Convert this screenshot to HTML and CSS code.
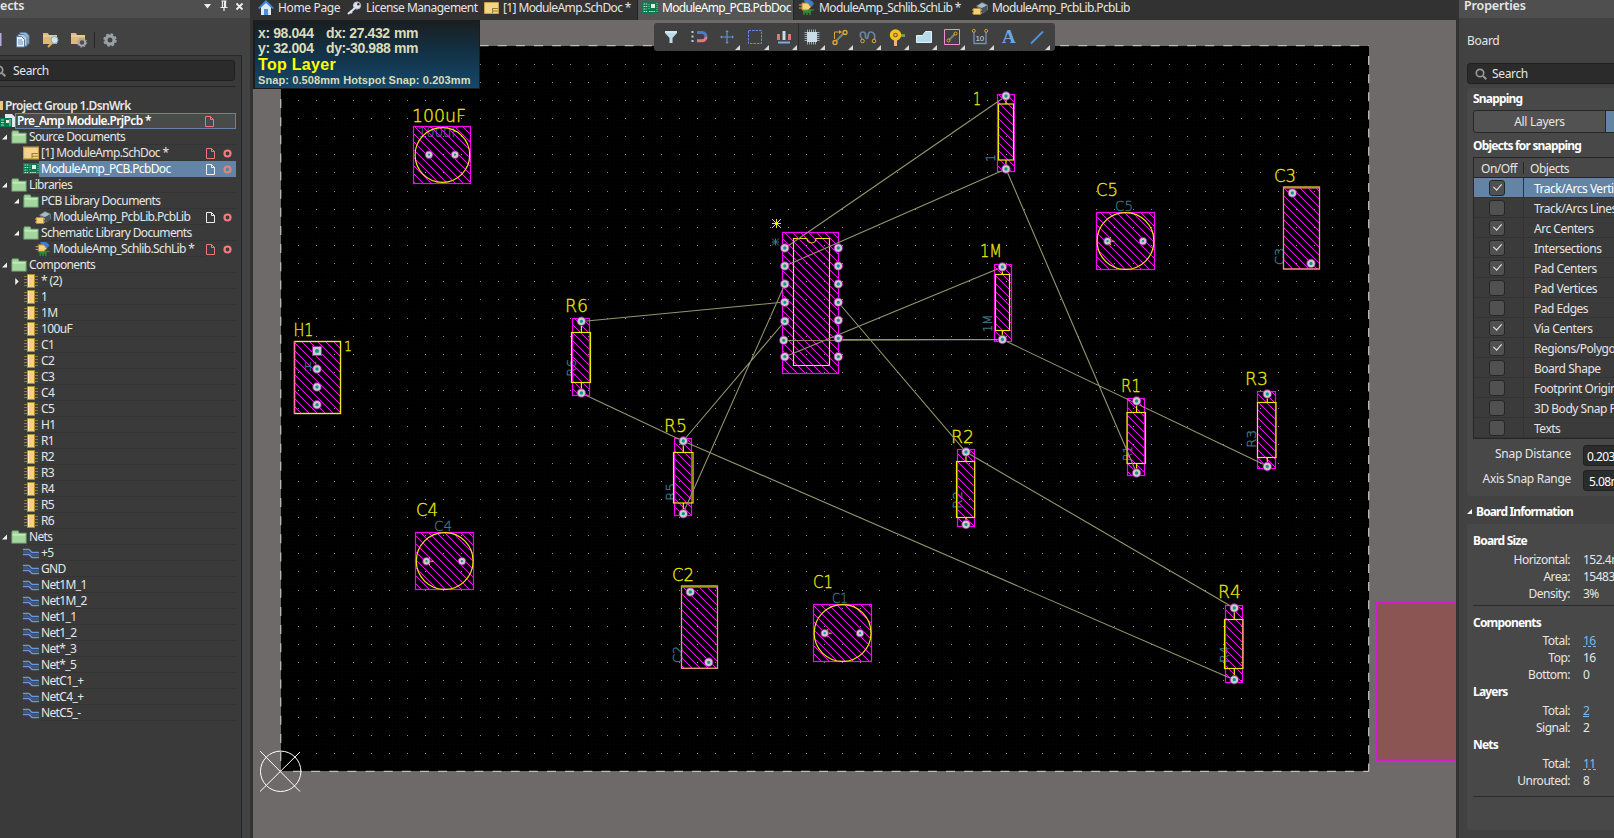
FILE: index.html
```html
<!DOCTYPE html>
<html lang="en">
<head>
<meta charset="utf-8">
<title>ModuleAmp_PCB.PcbDoc</title>
<link rel="stylesheet" href="styles.css">
</head>
<body>
<svg class="defs" width="0" height="0">
  <symbol id="i-folder" viewBox="0 0 14 13"><path d="M.5 2.5V12h13V3H7L6 1H1z" fill="#a5d6a0" stroke="#78b878"/><path d="M1 4.5h12" stroke="#d5f2d0"/></symbol>
  <symbol id="i-sch" viewBox="0 0 15 12"><path d="M.5.5h14v11H.5z" fill="#f2d48a" stroke="#c79f45"/><path d="M8 6.5h6M8 9h6M8.500 6v5" stroke="#9c7a2c"/></symbol>
  <symbol id="i-pcb" viewBox="0 0 16 12"><path d="M0 0h16v11H0z" fill="#087a50"/><path d="M1.500 2h4M1.500 4.500h4M1.500 7h3M1.500 9.500h4M7 9.500h6" stroke="#c6e8d0" stroke-dasharray="1.500 .7"/><path d="M9 2h4v4H9z" fill="#e2efe6"/><path d="M15 1v9M7 2v6" stroke="#7fd09f" stroke-dasharray="1 1"/></symbol>
  <symbol id="i-chip" viewBox="0 0 14 14"><path d="M0 2.500h14M0 5.500h14M0 8.500h14M0 11.500h14" stroke="#957a37"/><path d="M3.500.5h7v13h-7z" fill="#f5d27d" stroke="#b48a35"/><path d="M4.500 1v12" stroke="#fff0c2"/></symbol>
  <symbol id="i-net" viewBox="0 0 16 12"><path d="M0 2.500h6l3 3h7M0 7.500h6l3 3h7" fill="none" stroke="#6d94e0" stroke-width="1.500"/><path d="M0 5h5l4 3h7" fill="none" stroke="#4d6fae"/></symbol>
  <symbol id="i-plib" viewBox="0 0 16 14"><path d="m4 5 6-4 6 3v5l-6 4z" fill="#63727e"/><path d="m5 5 5-3 5 2-5 3z" fill="#a9bac6"/><path d="M10 7v6M12 6v5M14 5v5" stroke="#303b43"/><path d="M1.500 7.500h7v6h-7z" fill="#f4d27c" stroke="#b28a37"/><path d="M0 9h2M0 12h2M8 9h2M8 12h2" stroke="#e3bb5d"/></symbol>
  <symbol id="i-slib" viewBox="0 0 16 15"><path d="M5 0h6q3 1 4 4l-3 3H7z" fill="#3d7bd3"/><path d="M4 9h8v4H4z" fill="#278a35"/><path d="M5 13v2M8 13v2M11 13v2M12 10h3" stroke="#3baa42"/><path d="M3 3h6l3 4-3 3H3z" fill="#f5d27d" stroke="#ad812c"/><path d="M0 5h3M0 8h3" stroke="#d7ac4a"/></symbol>
  <symbol id="i-doc" viewBox="0 0 9 11"><path d="M.5.500h5l3 3v7h-8zM5.500.500v3h3" fill="none" stroke="currentColor"/></symbol>
  <symbol id="i-ring" viewBox="0 0 9 9"><circle cx="4.500" cy="4.500" r="3" fill="none" stroke="#ee7e7e" stroke-width="2.200"/></symbol>
  <symbol id="i-open" viewBox="0 0 6 6"><path d="M5 0v5H0z" fill="#f2f2f2"/></symbol>
  <symbol id="i-shut" viewBox="0 0 6 8"><path d="M1 0v8l4-4z" fill="#f2f2f2"/></symbol>
  <symbol id="i-glass" viewBox="0 0 12 12"><circle cx="5" cy="5" r="3.700" fill="none" stroke="#999" stroke-width="1.700"/><path d="m8 8 3.300 3.300" stroke="#999" stroke-width="2"/></symbol>
  <symbol id="i-fly" viewBox="0 0 5 5"><path d="M5 0v5H0z" fill="#d8d8d8"/></symbol>
</svg>

<div class="app">
  <aside class="projects">
    <header class="bar"><span class="bar-title">ects</span>
      <svg class="bar-icons" width="42" height="12" viewBox="0 0 42 12"><path d="M1 4h7l-3.500 4.500z" fill="#eee"/><path d="M18.500 1h5M19.500 1v6M22.500 1v6M17.500 7.500h7M21 7v4" stroke="#eee" fill="none" stroke-width="1.200"/><path d="M22 1v6" stroke="#eee" stroke-width="2"/><path d="m33.500 3.500 6 6m0-6-6 6" stroke="#eee" stroke-width="1.800"/></svg>
    </header>
    <div class="tools">
      <svg width="120" height="18" viewBox="0 0 120 18">
        <path d="M0 2h1.500v13H0z" fill="#b7a9dd"/>
        <path d="M20 1.500h6l3 3V13h-9z" fill="#9dbbd8" stroke="#597b9e"/><path d="M18 3.500h6l3 3V15h-9z" fill="#b7cfe6" stroke="#597b9e"/><path d="M16.500 5.500h5l3 3V16h-8z" fill="#e6f1fb" stroke="#597b9e"/><path d="M18 9h4M18 11h5M18 13h5" stroke="#6c90b5"/>
        <path d="M43 2h5l1 2h8v9H43z" fill="#dfb976"/><path d="M43 5h14" stroke="#f4dba8"/><circle cx="54.500" cy="9" r="3.500" fill="#cfe3f1" stroke="#8ba5b8"/><path d="m52 12-4 4" stroke="#e0ad5d" stroke-width="2"/>
        <path d="M71 2h5l1 2h8v9H71z" fill="#dfb976"/><path d="M71 5h14" stroke="#f4dba8"/><circle cx="82" cy="11.500" r="3.300" fill="#55504a" stroke="#a4a8aa" stroke-width="2"/><circle cx="82" cy="11.500" r="4.700" fill="none" stroke="#a4a8aa" stroke-dasharray="1.500 2.200"/>
        <path d="M94.500 1v16" stroke="#252525"/>
        <circle cx="110" cy="9" r="4" fill="none" stroke="#9aa3a8" stroke-width="3"/><circle cx="110" cy="9" r="6" fill="none" stroke="#9aa3a8" stroke-width="1.500" stroke-dasharray="2.700 2"/>
      </svg>
    </div>
    <div class="tree-pane">
      <div class="search"><svg width="12" height="12"><use href="#i-glass"/></svg><span>Search</span></div>
      <div class="rule"></div>
      <ul class="tree">
        <li class="group"><i class="stub"></i><b>Project Group 1.DsnWrk</b></li>
        <li class="project"><svg class="pic" width="15" height="14" viewBox="0 0 15 14"><path d="M5 0h7l3 3v10H5z" fill="#e6e6f0"/><path d="M0 4h12v9H0z" fill="#087a50"/><path d="M1 6h3M1 8.500h3M1 11h3M10 5v7" stroke="#a8e0b8"/><path d="M6 6h3v3H6z" fill="#e2efe6"/></svg><span class="frame"><b>Pre_Amp Module.PrjPcb *</b><svg class="doc red" width="9" height="11"><use href="#i-doc"/></svg></span></li>
        <li class="l0"><svg class="arr"><use href="#i-open"/></svg><svg class="ic"><use href="#i-folder"/></svg><span>Source Documents</span></li>
        <li class="l1"><svg class="arr"></svg><svg class="ic"><use href="#i-sch"/></svg><span>[1] ModuleAmp.SchDoc *</span><svg class="doc red"><use href="#i-doc"/></svg><svg class="ring"><use href="#i-ring"/></svg></li>
        <li class="l1 sel"><svg class="arr"></svg><svg class="ic"><use href="#i-pcb"/></svg><span>ModuleAmp_PCB.PcbDoc</span><svg class="doc"><use href="#i-doc"/></svg><svg class="ring"><use href="#i-ring"/></svg></li>
        <li class="l0"><svg class="arr"><use href="#i-open"/></svg><svg class="ic"><use href="#i-folder"/></svg><span>Libraries</span></li>
        <li class="l1"><svg class="arr"><use href="#i-open"/></svg><svg class="ic"><use href="#i-folder"/></svg><span>PCB Library Documents</span></li>
        <li class="l2"><svg class="arr"></svg><svg class="ic"><use href="#i-plib"/></svg><span>ModuleAmp_PcbLib.PcbLib</span><svg class="doc"><use href="#i-doc"/></svg><svg class="ring"><use href="#i-ring"/></svg></li>
        <li class="l1"><svg class="arr"><use href="#i-open"/></svg><svg class="ic"><use href="#i-folder"/></svg><span>Schematic Library Documents</span></li>
        <li class="l2"><svg class="arr"></svg><svg class="ic"><use href="#i-slib"/></svg><span>ModuleAmp_Schlib.SchLib *</span><svg class="doc red"><use href="#i-doc"/></svg><svg class="ring"><use href="#i-ring"/></svg></li>
        <li class="l0"><svg class="arr"><use href="#i-open"/></svg><svg class="ic"><use href="#i-folder"/></svg><span>Components</span></li>
        <li class="l1"><svg class="arr"><use href="#i-shut"/></svg><svg class="ic"><use href="#i-chip"/></svg><span>* (2)</span></li>
        <li class="l1"><svg class="arr"></svg><svg class="ic"><use href="#i-chip"/></svg><span>1</span></li>
        <li class="l1"><svg class="arr"></svg><svg class="ic"><use href="#i-chip"/></svg><span>1M</span></li>
        <li class="l1"><svg class="arr"></svg><svg class="ic"><use href="#i-chip"/></svg><span>100uF</span></li>
        <li class="l1"><svg class="arr"></svg><svg class="ic"><use href="#i-chip"/></svg><span>C1</span></li>
        <li class="l1"><svg class="arr"></svg><svg class="ic"><use href="#i-chip"/></svg><span>C2</span></li>
        <li class="l1"><svg class="arr"></svg><svg class="ic"><use href="#i-chip"/></svg><span>C3</span></li>
        <li class="l1"><svg class="arr"></svg><svg class="ic"><use href="#i-chip"/></svg><span>C4</span></li>
        <li class="l1"><svg class="arr"></svg><svg class="ic"><use href="#i-chip"/></svg><span>C5</span></li>
        <li class="l1"><svg class="arr"></svg><svg class="ic"><use href="#i-chip"/></svg><span>H1</span></li>
        <li class="l1"><svg class="arr"></svg><svg class="ic"><use href="#i-chip"/></svg><span>R1</span></li>
        <li class="l1"><svg class="arr"></svg><svg class="ic"><use href="#i-chip"/></svg><span>R2</span></li>
        <li class="l1"><svg class="arr"></svg><svg class="ic"><use href="#i-chip"/></svg><span>R3</span></li>
        <li class="l1"><svg class="arr"></svg><svg class="ic"><use href="#i-chip"/></svg><span>R4</span></li>
        <li class="l1"><svg class="arr"></svg><svg class="ic"><use href="#i-chip"/></svg><span>R5</span></li>
        <li class="l1"><svg class="arr"></svg><svg class="ic"><use href="#i-chip"/></svg><span>R6</span></li>
        <li class="l0"><svg class="arr"><use href="#i-open"/></svg><svg class="ic"><use href="#i-folder"/></svg><span>Nets</span></li>
        <li class="l1"><svg class="arr"></svg><svg class="ic"><use href="#i-net"/></svg><span>+5</span></li>
        <li class="l1"><svg class="arr"></svg><svg class="ic"><use href="#i-net"/></svg><span>GND</span></li>
        <li class="l1"><svg class="arr"></svg><svg class="ic"><use href="#i-net"/></svg><span>Net1M_1</span></li>
        <li class="l1"><svg class="arr"></svg><svg class="ic"><use href="#i-net"/></svg><span>Net1M_2</span></li>
        <li class="l1"><svg class="arr"></svg><svg class="ic"><use href="#i-net"/></svg><span>Net1_1</span></li>
        <li class="l1"><svg class="arr"></svg><svg class="ic"><use href="#i-net"/></svg><span>Net1_2</span></li>
        <li class="l1"><svg class="arr"></svg><svg class="ic"><use href="#i-net"/></svg><span>Net*_3</span></li>
        <li class="l1"><svg class="arr"></svg><svg class="ic"><use href="#i-net"/></svg><span>Net*_5</span></li>
        <li class="l1"><svg class="arr"></svg><svg class="ic"><use href="#i-net"/></svg><span>NetC1_+</span></li>
        <li class="l1"><svg class="arr"></svg><svg class="ic"><use href="#i-net"/></svg><span>NetC4_+</span></li>
        <li class="l1"><svg class="arr"></svg><svg class="ic"><use href="#i-net"/></svg><span>NetC5_-</span></li>
      </ul>
    </div>
  </aside>

  <main class="editor">
    <nav class="tabs">
      <div class="tab home"><svg width="16" height="16" viewBox="0 0 16 16"><path d="M3 7v8h10V7L8 2z" fill="#dce9f7"/><path d="M8 0 0 8l1.500 1L8 3l6.500 6L16 8z" fill="#3c8ae0"/><path d="M6 9h4v6H6z" fill="#4a90dd"/></svg><span>Home Page</span></div>
      <div class="tab lic"><svg width="16" height="14" viewBox="0 0 16 14"><circle cx="11" cy="4.500" r="3.600" fill="#dfe3ee" stroke="#b8bfce"/><circle cx="12.300" cy="3.300" r="1.200" fill="#333"/><path d="m9 7-7 6M4 10l2 2" stroke="#dfe3ee" stroke-width="2.200"/></svg><span>License Management</span></div>
      <div class="tab sch"><svg width="15" height="12"><use href="#i-sch"/></svg><span>[1] ModuleAmp.SchDoc *</span></div>
      <div class="tab pcb active"><svg width="16" height="12"><use href="#i-pcb"/></svg><span>ModuleAmp_PCB.PcbDoc</span></div>
      <div class="tab slib"><svg width="16" height="15"><use href="#i-slib"/></svg><span>ModuleAmp_Schlib.SchLib *</span></div>
      <div class="tab plib"><svg width="16" height="14"><use href="#i-plib"/></svg><span>ModuleAmp_PcbLib.PcbLib</span></div>
    </nav>
    <div class="canvas">
      <svg id="board" width="1203" height="818" viewBox="253 20 1203 818">
        <defs>
          <pattern id="hatch" width="8" height="8" patternUnits="userSpaceOnUse"><path d="M0 0h1v1h1v1h1v1h1v1h1v1h1v1h1v1h1v1h-1v-1h-1v-1h-1v-1h-1v-1h-1v-1h-1v-1h-1v-1h-1z" fill="#f0f" shape-rendering="crispEdges"/></pattern>
          <pattern id="fine" width="3.628" height="3.628" patternUnits="userSpaceOnUse"><path d="M0 0h1v1H0z" fill="#080808"/></pattern>
        </defs>
        <path d="M281 46h1088v725H281z" fill="#000"/>
        <path d="M281 46h1088v725H281z" fill="url(#fine)"/>
        <g id="grid" fill="#8f8f8f" shape-rendering="crispEdges"></g>
        <path d="M479.600 45.700H1369M293 771.300h1076" class="edge"/>
        <path d="M280.700 99v672M1368.700 56v715" class="edge"/>
        <path d="M1470 602.300h-93.500v158h93.500" fill="#8b5554" stroke="#d01fd0" stroke-width="1.300"/>
        <g id="parts"></g>
        <g id="nets" class="rat"></g>
        <g id="pads"></g>
        <g stroke="#fff" fill="none"><circle cx="280.700" cy="771.300" r="20.200"/><path d="m260 751 40 40.500m0-39.500-40 39.500"/></g>
      </svg>
      <div class="hud"><div class="hud-in">
        <p class="xy"><span>x: 98.044</span><span>dx: 27.432</span><span>mm</span></p>
        <p class="xy"><span>y: 32.004</span><span>dy:-30.988</span><span>mm</span></p>
        <p class="layer">Top Layer</p>
        <p class="snap">Snap: 0.508mm Hotspot Snap: 0.203mm</p>
      </div></div>
      <div class="active-bar">
        <span><svg width="18" height="18" viewBox="0 0 18 18"><path d="M3 3h12v2l-4.500 5v5h-3v-5L3 5z" fill="#b9dce8"/><path d="M3 4h12" stroke="#e4f5fa"/></svg></span>
        <span><svg width="18" height="18" viewBox="0 0 18 18"><path d="M7 4.500h5a4 4 0 0 1 4 4.300" fill="none" stroke="#4f78c5" stroke-width="3"/><path d="M16 8.800a4 4 0 0 1-4 4H7" fill="none" stroke="#e07a80" stroke-width="3"/><path d="M2.500 3v12" stroke="#b9cdd8" stroke-width="2" stroke-dasharray="2 2.500"/></svg></span>
        <span><svg width="18" height="18" viewBox="0 0 18 18"><path d="M9 3v12M3 9h12" stroke="#6790d8" stroke-width="1.200"/><path d="m9 2 1.700 2H7.300zM9 16l1.700-2H7.300zM2 9l2-1.700v3.400zM16 9l-2-1.700v3.400z" fill="#6790d8"/></svg><svg class="fly"><use href="#i-fly"/></svg></span>
        <span><svg width="18" height="18" viewBox="0 0 18 18"><path d="M2.500 2.500h13v13h-13z" fill="none" stroke="#6589e8" stroke-dasharray="2.500 1"/></svg><svg class="fly"><use href="#i-fly"/></svg></span>
        <span><svg width="18" height="18" viewBox="0 0 18 18"><path d="M3.500 6v6M14.500 6v6" stroke="#e0757b" stroke-width="3"/><path d="M9 3v9" stroke="#c9dceb" stroke-width="3"/><path d="M3 14.500h12" stroke="#7fa8dc" stroke-width="2"/></svg><svg class="fly"><use href="#i-fly"/></svg></span>
        <span class="sep"><svg width="18" height="18" viewBox="0 0 18 18"><path d="M4.500 1.500v15M6.500 1.500v15M8.500 1.500v15M10.500 1.500v15M12.500 1.500v15M1.500 4.500h15M1.500 6.500h15M1.500 8.500h15M1.500 10.500h15M1.500 12.500h15" stroke="#9aa9b3"/><path d="M4 4h10v10H4z" fill="#ccdce6"/></svg><svg class="fly"><use href="#i-fly"/></svg></span>
        <span><svg width="18" height="18" viewBox="0 0 18 18"><path d="M3.500 11V4H9" fill="none" stroke="#dfa534"/><path d="m8 2 3 2-3 2z" fill="#dfa534"/><path d="m5 13 8-8" stroke="#77838c" stroke-width="2"/><circle cx="14" cy="4.500" r="2" fill="none" stroke="#dfa534" stroke-width="1.400"/><circle cx="4" cy="14.500" r="2" fill="none" stroke="#dfa534" stroke-width="1.400"/></svg><svg class="fly"><use href="#i-fly"/></svg></span>
        <span><svg width="18" height="18" viewBox="0 0 18 18"><path d="M3.500 11.500C0 8 1 4 4 4s2.500 3 2.500 5 2.500 2 2.500 0 0-5 3-5 5 4 3 7.500" fill="none" stroke="#6d84a2" stroke-width="1.700"/><circle cx="3.500" cy="13" r="1.800" fill="none" stroke="#dfa534"/><circle cx="15" cy="13" r="1.800" fill="none" stroke="#dfa534"/></svg><svg class="fly"><use href="#i-fly"/></svg></span>
        <span><svg width="18" height="18" viewBox="0 0 18 18"><path d="M11 7.500h7" stroke="#61a845" stroke-width="3"/><path d="M8.500 11v7" stroke="#e9b184" stroke-width="3"/><circle cx="8.500" cy="7" r="4" fill="#5b4720" stroke="#f5c21d" stroke-width="3.500"/><circle cx="8.500" cy="7" r="1.400" fill="#d9b255"/></svg><svg class="fly"><use href="#i-fly"/></svg></span>
        <span><svg width="18" height="18" viewBox="0 0 18 18"><path d="M1.500 14.500v-7h6l3-4h6v11z" fill="#b8dbea" stroke="#e1f4fb"/></svg><svg class="fly"><use href="#i-fly"/></svg></span>
        <span><svg width="18" height="18" viewBox="0 0 18 18"><path d="M1.500 1.500h15v15h-15z" fill="none" stroke="#f08bd6"/><path d="m6 12 6-6" stroke="#77838c" stroke-width="1.800"/><circle cx="12.500" cy="5.500" r="1.500" fill="none" stroke="#dfa534"/><circle cx="5.500" cy="12.500" r="1.500" fill="none" stroke="#dfa534"/></svg><svg class="fly"><use href="#i-fly"/></svg></span>
        <span><svg width="18" height="18" viewBox="0 0 18 18"><path d="M3 4v11.500h12V4" fill="none" stroke="#7190be" stroke-width="1.300"/><circle cx="2.800" cy="2.800" r="1.500" fill="none" stroke="#dfa534"/><circle cx="15.200" cy="2.800" r="1.500" fill="none" stroke="#dfa534"/><text x="4.500" y="12.500" class="dim">10</text></svg><svg class="fly"><use href="#i-fly"/></svg></span>
        <span><b class="letter">A</b></span>
        <span><svg width="18" height="18" viewBox="0 0 18 18"><path d="m3 15.500 12-12" stroke="#5095dc" stroke-width="1.800"/></svg><svg class="fly"><use href="#i-fly"/></svg></span>
      </div>
    </div>
  </main>

  <aside class="props">
    <header class="bar">Properties</header>
    <div class="kind">Board</div>
    <div class="search"><svg width="12" height="12"><use href="#i-glass"/></svg><span>Search</span></div>
    <section class="card snapping">
      <h3>Snapping</h3>
      <div class="seg"><span>All Layers</span><span class="on"></span></div>
      <h3 class="second">Objects for snapping</h3>
      <div class="table">
        <div class="tr th"><span>On/Off</span><span>Objects</span></div>
        <div class="tr sel"><i class="cb on"></i><span>Track/Arcs Vertices</span></div>
        <div class="tr"><i class="cb"></i><span>Track/Arcs Lines</span></div>
        <div class="tr"><i class="cb on"></i><span>Arc Centers</span></div>
        <div class="tr"><i class="cb on"></i><span>Intersections</span></div>
        <div class="tr"><i class="cb on"></i><span>Pad Centers</span></div>
        <div class="tr"><i class="cb"></i><span>Pad Vertices</span></div>
        <div class="tr"><i class="cb"></i><span>Pad Edges</span></div>
        <div class="tr"><i class="cb on"></i><span>Via Centers</span></div>
        <div class="tr"><i class="cb on"></i><span>Regions/Polygons</span></div>
        <div class="tr"><i class="cb"></i><span>Board Shape</span></div>
        <div class="tr"><i class="cb"></i><span>Footprint Origins</span></div>
        <div class="tr"><i class="cb"></i><span>3D Body Snap Points</span></div>
        <div class="tr"><i class="cb"></i><span>Texts</span></div>
      </div>
      <div class="field"><label>Snap Distance</label><span class="input">0.203mm</span></div>
      <div class="field"><label>Axis Snap Range</label><span class="input wide">5.08mm</span></div>
    </section>
    <h2><svg width="6" height="6"><use href="#i-open"/></svg>Board Information</h2>
    <section class="card info">
      <h3>Board Size</h3>
      <dl><dt>Horizontal:</dt><dd>152.4mm</dd><dt>Area:</dt><dd>15483</dd><dt>Density:</dt><dd>3%</dd></dl>
      <hr>
      <h3>Components</h3>
      <dl class="gap"><dt>Total:</dt><dd><a>16</a></dd><dt>Top:</dt><dd>16</dd><dt>Bottom:</dt><dd>0</dd></dl>
      <h3 class="tight">Layers</h3>
      <dl class="gap"><dt>Total:</dt><dd><a>2</a></dd><dt>Signal:</dt><dd>2</dd></dl>
      <h3 class="tight">Nets</h3>
      <dl class="gap"><dt>Total:</dt><dd><a>11</a></dd><dt>Unrouted:</dt><dd>8</dd></dl>
      <hr class="last">
    </section>
  </aside>
</div>
<script src="board.js"></script>
</body>
</html>
```
FILE: styles.css
```css
* { box-sizing: border-box; }
body { margin: 0; background: #323232; color: #e6e6e6; font: 12px/16px "Noto Sans", "Open Sans", sans-serif; letter-spacing: -.64px; }
.defs { position: absolute; }
ul, p, h2, h3, dl, dd { margin: 0; padding: 0; list-style: none; }
.app { display: grid; grid-template-columns: 253px 1203px 158px; width: 1614px; height: 838px; overflow: hidden; white-space: nowrap; }
.bar { height: 18px; background: #4f4f4f; font-weight: 600; font-size: 12.500px; line-height: 12px; letter-spacing: -.15px; }

/* Projects panel */
.projects { background: #424242; border-right: 3px solid #323232; height: 838px; overflow: hidden; }
.projects .bar { display: flex; justify-content: space-between; }
.bar-icons { margin-right: 5px; }
.tools { height: 37px; padding-top: 13px; }
.tools svg { display: block; }
.tree-pane { width: 242px; height: 783px; background: #3a3a3a; border-top: 1px solid #282828; border-right: 1px solid #252525; padding-top: 4px; }
.search { display: flex; align-items: center; background: #2b2b2b; border: 1px solid #202020; border-radius: 3px; height: 21px; letter-spacing: -.35px; }
.projects .search { width: 242px; margin-left: -7px; gap: 7px; }
.rule { width: 235px; height: 1px; background: #252525; margin: 5px 0 10px; }
.tree li { height: 16px; display: flex; align-items: center; width: 236px; }
.tree li > span { flex: 1; height: 16px; line-height: 16px; padding-left: 2px; border-bottom: 1px solid #343434; }
.tree .arr { width: 6px; height: 7px; flex: none; }
.tree .ic { width: 16px; height: 14px; flex: none; }
.tree .doc { width: 9px; height: 11px; margin-right: 8px; color: #eee; }
.tree .red { color: #e97777; }
.tree .ring { width: 9px; height: 9px; margin-right: 4px; }
.l0 { padding-left: 2px; } .l0 .ic { margin-left: 3px; }
.l1 { padding-left: 14px; } .l1 .ic { margin-left: 3px; }
.l2 { padding-left: 26px; } .l2 .ic { margin-left: 3px; }
.tree .sel { background: linear-gradient(90deg, transparent 39px, #6384a6 39px); }
.tree .sel > span { border-color: transparent; color: #fff; }
.stub { width: 3px; height: 9px; background: #eec77d; margin-right: 2px; }
.group b, .project b { font-weight: 600; letter-spacing: -.64px; }
.tree .group b { padding-top: 1px; }
.tree li.project > .frame { display: flex; align-items: center; border: 1px solid #6384a6; background: #4a4a4a; padding-left: 1px; color: #fff; }
.frame b { flex: 1; } .tree .frame .doc { margin-right: 21px; }

/* Document tabs */
.editor { display: flex; flex-direction: column; height: 838px; min-width: 0; }
.tabs { display: flex; height: 20px; background: #323232; letter-spacing: -.62px; }
.tab { display: flex; align-items: center; height: 20px; padding: 0 0 5px 5px; gap: 4px; flex: none; }
.tab svg { flex: none; }
.home { width: 88px; letter-spacing: -.35px; } .lic { width: 140px; letter-spacing: -.5px; } .sch { width: 156px; padding-left: 3px; }
.pcb { width: 157px; padding-left: 4px; border-left: 1px solid #222; border-right: 1px solid #222; letter-spacing: -.68px; }
.active { background: #555; color: #fff; }
.slib { width: 173px; } .plib { width: 190px; }

/* PCB canvas */
.canvas { position: relative; width: 1203px; height: 818px; background: #6e6a69; overflow: hidden; }
#board { display: block; }
.edge { stroke: #bdbdbd; stroke-width: 1.300; stroke-dasharray: 9 9.140; }
.rat { stroke: #96966e; stroke-width: 1.100; fill: none; }
.lbl { font-family: "DejaVu Sans", sans-serif; font-weight: 200; letter-spacing: 0; }
.hud { position: absolute; left: 0; top: 0; width: 227px; height: 69px; background: #1c1c1c; padding: 0 1px 1px 2px; }
.hud-in { width: 224px; height: 68px; background: linear-gradient(#1b1e20, #123247 50%, #15486a); padding: 6px 3px; font-family: "Liberation Sans", Arial, sans-serif; font-weight: bold; color: #dcdcb8; }
.xy { display: grid; grid-template-columns: 68px 68px 30px; font-size: 14px; line-height: 15px; letter-spacing: -.4px; }
.layer { color: #ff0; font-size: 16px; line-height: 17px; letter-spacing: .3px; }
.snap { font-size: 11px; line-height: 14px; letter-spacing: .1px; }
.active-bar { position: absolute; left: 401px; top: 3px; width: 401px; height: 28px; background: #404040; border-radius: 3px; display: flex; padding-left: 3px; }
.active-bar > span { width: 28.140px; height: 28px; display: flex; align-items: center; justify-content: center; position: relative; }
.active-bar .fly { position: absolute; right: 1px; bottom: 1px; width: 5px; height: 5px; }
.active-bar .sep { border-left: 1px solid #2b2b2b; }
.letter { font: bold 19px "Liberation Serif", serif; color: #6aa9e4; }
.dim { font: 8px "Liberation Sans", sans-serif; fill: #d0d8e0; letter-spacing: -.3px; }

/* Properties panel */
.props { background: #424242; border-left: 3px solid #323232; height: 838px; overflow: hidden; }
.props .bar { padding-left: 5px; }
.kind { height: 45px; padding: 15px 0 0 8px; letter-spacing: -.3px; }
.props .search { margin-left: 8px; width: 170px; padding-left: 7px; gap: 5px; }
.card { background: #484848; margin-left: 8px; padding-left: 6px; width: 200px; border-radius: 3px; }
.card h3 { font-size: 12px; line-height: 17px; height: 16px; font-weight: 700; letter-spacing: -.8px; color: #fff; }
.snapping { height: 408px; margin-top: 4px; padding-top: 2px; }
.seg { display: flex; height: 23px; margin-top: 4px; border: 1px solid #262626; border-radius: 3px; background: #525252; overflow: hidden; letter-spacing: -.3px; }
.seg span { width: 131px; flex: none; text-align: center; line-height: 21px; }
.seg .on { background: #6384a6; border-left: 1px solid #262626; }
.card .second { margin-top: 4px; height: 20px; line-height: 18px; }
.table { border: 1px solid #262626; background: #3b3b3b; letter-spacing: -.48px; }
.tr { display: flex; align-items: center; height: 20px; border-bottom: 1px solid #333; }
.tr > span { padding-left: 10px; border-left: 1px solid #333; height: 19px; line-height: 21px; }
.th { background: #484848; border-bottom: 1px solid #262626; }
.th span:first-child { width: 49px; padding-left: 7px; border: 0; }
.th span:last-child { padding-left: 6px; border-color: #262626; height: 12px; line-height: 13px; }
.tr.sel { background: #6384a6; color: #fff; }
.cb { width: 16px; height: 16px; margin: 0 18px 0 15px; background: #515151; border: 1px solid #262626; border-radius: 3px; flex: none; }
.cb.on::after { content: ""; display: block; width: 4px; height: 7px; margin: 1px 0 0 5px; border: solid #eee; border-width: 0 1.400px 1.400px 0; transform: rotate(42deg); }
.field { display: flex; height: 21px; margin-top: 4px; letter-spacing: -.3px; }
.table + .field { margin-top: 6px; }
.field label { width: 98px; text-align: right; line-height: 18px; margin-right: 12px; }
.input { width: 80px; background: #2b2b2b; border: 1px solid #202020; border-radius: 3px; padding-left: 3px; line-height: 21px; color: #fff; letter-spacing: -.55px; }
.wide { padding-left: 5px; }
h2 { display: flex; align-items: center; gap: 3px; height: 28px; padding: 4px 0 0 8px; font-size: 12px; font-weight: 700; letter-spacing: -.85px; color: #fff; }
.info { height: 306px; padding-top: 8px; }
dl { display: grid; grid-template-columns: 97px 60px; column-gap: 13px; grid-auto-rows: 17px; line-height: 17px; padding-top: 3px; letter-spacing: -.5px; }
dt { text-align: right; }
.gap { padding-top: 3px; }
.info h3:not(.tight) + .gap { padding-top: 2px; }
dd a { display: inline-block; color: #7fb9ea; height: 15px; line-height: 17px; border-bottom: 1px dashed #7fb9ea; }
hr { height: 1px; border: 0; background: #2c2c2c; margin: 3px 0 8px; }
hr.last { margin-top: 7px; }
```
FILE: board.js
```js
const mk = (parent, tag, attrs, text) => {
  const el = document.createElementNS('http://www.w3.org/2000/svg', tag);
  for (const k in attrs) el.setAttribute(k, attrs[k]);
  if (text) el.textContent = text;
  document.getElementById(parent).append(el);
};
const YEL = '#ecec00', GHOST = '#3f7684', MAG = '#ff00ff';

// Coarse grid: 2.54 mm pitch, measured from the board origin
let dots = '';
for (let i = 1; i < 60; i++)
  for (let j = 1; j < 40; j++)
    dots += `M${Math.floor(280.500 + i * 18.140)} ${Math.floor(771.500 - j * 18.140)}h1v1h-1z`;
mk('grid', 'path', { d: dots });

const rect = (x1, y1, x2, y2, stroke, fill = 'none', w = 1.200) =>
  mk('parts', 'rect', { x: x1, y: y1, width: x2 - x1, height: y2 - y1, stroke, fill, 'stroke-width': w });
const label = (t, x, base, w, size = 17, color = YEL) =>
  mk('parts', 'text', { x, y: base, class: 'lbl', 'font-size': size, fill: color, stroke: color, 'stroke-width': .3, textLength: w, lengthAdjust: 'spacingAndGlyphs' }, t);
const ghostV = (t, x, y, w) =>
  mk('parts', 'text', { transform: `translate(${x} ${y}) rotate(-90)`, class: 'lbl', 'font-size': 13, fill: GHOST, stroke: GHOST, 'stroke-width': .4, textLength: w, lengthAdjust: 'spacingAndGlyphs' }, t);
const pad = (x, y, r = 3.700) => {
  mk('pads', 'circle', { cx: x, cy: y, r, fill: '#129090', stroke: '#a226a2', 'stroke-width': 2 });
  mk('pads', 'circle', { cx: x, cy: y, r: r - 1, fill: '#0d9494', stroke: '#cbcbcb', 'stroke-width': 2.100 });
};

// Axial resistors: name, outer box, body box, pad x, pad y pair, label, ghost label
[
  ['1', 997.5, 94.5, 1014.5, 171.5, 998.5, 104, 1013.5, 160, 1006, 96, 169, 973, 105, 8, 995, 162, 8],
  ['1M', 994.5, 264.5, 1011.5, 341.5, 995.5, 274.5, 1009.5, 330.5, 1002.4, 267, 339.5, 980, 257, 22, 992, 332, 17],
  ['R1', 1127.5, 398.5, 1144.5, 475.5, 1127, 412.5, 1145.5, 463.5, 1136.6, 401, 473, 1121, 391.5, 20, 1132, 461, 15],
  ['R3', 1257.5, 391.5, 1275.5, 468.5, 1257.5, 402.5, 1276, 457.5, 1267.3, 394, 466.5, 1245, 384.5, 23, 1256, 448, 18],
  ['R6', 572.5, 318.5, 589.5, 395.5, 571.5, 332.5, 590.5, 382.5, 581.4, 321.3, 393, 565, 311.5, 23, 576, 377, 18],
  ['R5', 674.5, 438.5, 691.5, 515.5, 673.5, 452.5, 693, 503, 683.3, 441, 513.7, 664, 431.5, 23, 675, 501, 18],
  ['R2', 957.5, 449.5, 974.5, 526.5, 956.5, 461.5, 974.7, 517.5, 966, 452, 524.5, 951, 442.5, 23, 962, 509, 18],
  ['R4', 1225.5, 605.5, 1242.5, 682.5, 1224.5, 619.5, 1243, 668.5, 1234.3, 608, 679.7, 1218, 598, 23, 1229, 663, 17]
].forEach(([n, a, b, c, d, e, f, g, h, px, p1, p2, lx, ly, lw, gx, gy, gw]) => {
  ghostV(n, gx, gy, gw);
  rect(a, b, c, d, MAG, 'url(#hatch)');
  rect(e, f, g, h, YEL);
  mk('parts', 'path', { d: `M${px} ${p1}V${f}M${px} ${h}V${p2}`, stroke: YEL, 'stroke-width': 1.2 });
  label(n, lx, ly, lw);
  pad(px, p1); pad(px, p2);
});

// Radial capacitors
[
  ['100uF', 413.5, 126.5, 470.5, 183.5, 442.4, 155, 27.3, 429, 455, 154.7, 412, 121.5, 54, 418, 137, 41],
  ['C5', 1096.5, 212.5, 1154.5, 269.5, 1125.5, 241, 28.4, 1107.5, 1143, 241.2, 1096, 195.5, 22, 1115, 211, 18],
  ['C1', 813.5, 604.5, 871.5, 661.5, 842.6, 633, 28.4, 824.7, 860, 633.2, 813, 587.5, 20, 832, 603, 16],
  ['C4', 415.5, 532.5, 473.5, 589.5, 444.7, 561, 28.4, 426.5, 462, 561.2, 416, 515.5, 22, 434, 531, 18]
].forEach(([n, a, b, c, d, cx, cy, r, x1, x2, py, lx, ly, lw, gx, gy, gw]) => {
  label(n, gx, gy, gw, 13.500, GHOST);
  rect(a, b, c, d, MAG, 'url(#hatch)');
  mk('parts', 'circle', { cx, cy, r, fill: 'none', stroke: YEL, 'stroke-width': 1.200 });
  label(n, lx, ly, lw);
  if (n !== '100uF') mk('parts', 'path', { d: `M${x1} ${py}h7M${x1 + 3} ${py - 4}v8`, stroke: YEL });
  pad(x1, py, 3.200); pad(x2, py, 3.200);
});

// Box capacitors
[
  ['C3', 1283.500, 187, 1319.500, 269, 1292.300, 193, 1311, 263.500, 1274, 182, 1284, 265],
  ['C2', 681.500, 586, 717.500, 668.300, 690.300, 592, 708.700, 662.300, 672, 581, 682, 663]
].forEach(([n, a, b, c, d, x1, y1, x2, y2, lx, ly, gx, gy]) => {
  ghostV(n, gx, gy, 17);
  rect(a, b + 1, c, d, MAG, 'url(#hatch)', 1);
  rect(a, b, c, d, '#e8a060', 'none', 1.300);
  mk('parts', 'path', { d: `M${a} ${b + .5}H${c}`, stroke: '#a0a020', 'stroke-width': 2 });
  label(n, lx, ly, 22);
  pad(x1, y1); pad(x2, y2);
});

// Header H1
rect(294.500, 341.500, 340.500, 413.500, '#f0f01c', 'url(#hatch)', 1.400);
mk('parts', 'path', { d: 'M294.500 341v73', stroke: '#ff70a0', 'stroke-width': 1.300 });
label('H1', 293.500, 335.500, 20);
label('1', 344, 351, 8, 14);
label('H1', 304, 371, 15, 13, GHOST);
mk('pads', 'rect', { x: 312.500, y: 346.500, width: 9, height: 9, fill: '#cbcbcb', stroke: '#a226a2' });
mk('pads', 'circle', { cx: 317, cy: 351, r: 2.100, fill: '#0d9494' });
[369, 387, 404.700].forEach(y => pad(317, y));

// 14-pin DIP
rect(782.500, 232.500, 838.500, 373.500, MAG, 'url(#hatch)');
mk('parts', 'path', { d: 'M807 238.500H793.500V365.500H829.500V238.500H816A4.500 4.500 0 0 1 807 238.500', stroke: YEL, fill: 'none', 'stroke-width': 1.200 });
[248, 266, 284, 302.300, 321.300, 340.300, 356.700].forEach((y, i) => pad(i === 5 ? 783.700 : 784.800, y));
[248, 266, 284, 302.300, 320.300, 338.300, 356.700].forEach(y => pad(838.300, y));
const star = (x, y, r, c) => mk('parts', 'path', { d: `M${x - r} ${y}h${2 * r}M${x} ${y - r}v${2 * r}M${x - r} ${y - r}l${2 * r} ${2 * r}M${x + r} ${y - r}l${-2 * r} ${2 * r}`, stroke: c });
star(776.500, 223.500, 4.500, YEL);
star(775.500, 242, 3.500, GHOST);

// Unrouted connections
mk('nets', 'path', { d: `M1006 96L785 248M1006 169L785 266M1006 169L1136.600 473M1002.400 267L785 356.700
M1002.400 339.500L784 340.500M838 339.500H1002M1002.400 339.500L1267 466M838 302L966 452L1234 608
M785 284L683 513.500M785 321L683 441M785 302L581.500 321.500M581 393L683 441L1234 679.700` });
```
